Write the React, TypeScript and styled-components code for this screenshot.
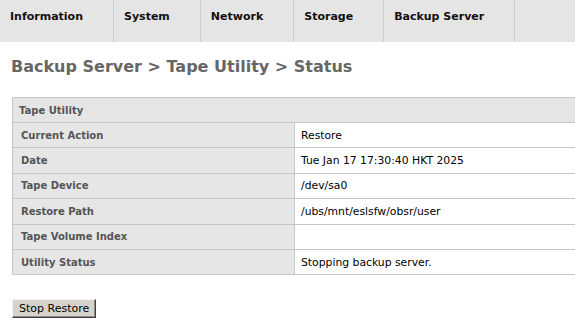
import * as React from 'react';
import styled, { createGlobalStyle } from 'styled-components';

const GlobalStyle = createGlobalStyle`
  html, body {
    margin: 0;
    padding: 0;
    background: #fff;
    overflow: hidden;
  }
  body {
    font-family: 'DejaVu Sans', Verdana, sans-serif;
  }
`;

const NavBar = styled.div`
  display: flex;
  height: 42px;
  background: #e5e5e5;
`;

const NavTab = styled.div`
  padding: 10px 30px 0 10px;
  border-right: 1px solid #cccccc;
  font-size: 11px;
  line-height: 14px;
  font-weight: bold;
  color: #111;
  white-space: nowrap;
`;

const Heading = styled.h1`
  margin: 14px 0 0 11px;
  font-size: 16px;
  font-weight: bold;
  color: #666666;
  line-height: 21px;
`;

const TableWrap = styled.div`
  margin: 20px 0 0 12px;
  width: 620px;
`;

const Table = styled.table`
  width: 100%;
  border-collapse: collapse;
  font-size: 10px;
`;

const HeadCell = styled.th`
  height: 24px;
  padding: 0 0 0 6px;
  text-align: left;
  background: #e5e5e5;
  border: 1px solid #c6c6c6;
  color: #555;
  font-weight: bold;
`;

const LabelCell = styled.td`
  width: 273px;
  height: 24.4px;
  padding: 0 0 0 8px;
  background: #e6e6e6;
  border: 1px solid #c6c6c6;
  color: #555;
  font-weight: bold;
`;

const ValueCell = styled.td`
  height: 24.4px;
  padding: 0 0 0 6px;
  border: 1px solid #c6c6c6;
  color: #000;
  font-size: 10.8px;
`;

const ButtonRow = styled.div`
  margin: 22px 0 0 12px;
`;

const Button = styled.button`
  height: 19px;
  padding: 0 6px;
  font-family: 'DejaVu Sans', sans-serif;
  font-size: 11px;
  color: #000;
  background: #d6d3cc;
  border: 1px solid;
  border-color: #f4f3ef #404040 #404040 #f4f3ef;
  box-shadow: inset -1px -1px 0 #8c8a85;
`;

const rows: [string, string][] = [
  ['Current Action', 'Restore'],
  ['Date', 'Tue Jan 17 17:30:40 HKT 2025'],
  ['Tape Device', '/dev/sa0'],
  ['Restore Path', '/ubs/mnt/eslsfw/obsr/user'],
  ['Tape Volume Index', ''],
  ['Utility Status', 'Stopping backup server.'],
];

const tabs = ['Information', 'System', 'Network', 'Storage', 'Backup Server'];

export default function App() {
  return (
    <>
      <GlobalStyle />
      <NavBar>
        {tabs.map(t => (
          <NavTab key={t}>{t}</NavTab>
        ))}
      </NavBar>
      <Heading>Backup Server &gt; Tape Utility &gt; Status</Heading>
      <TableWrap>
        <Table>
          <thead>
            <tr>
              <HeadCell colSpan={2}>Tape Utility</HeadCell>
            </tr>
          </thead>
          <tbody>
            {rows.map(([label, value]) => (
              <tr key={label}>
                <LabelCell>{label}</LabelCell>
                <ValueCell>{value}</ValueCell>
              </tr>
            ))}
          </tbody>
        </Table>
      </TableWrap>
      <ButtonRow>
        <Button>Stop Restore</Button>
      </ButtonRow>
    </>
  );
}
